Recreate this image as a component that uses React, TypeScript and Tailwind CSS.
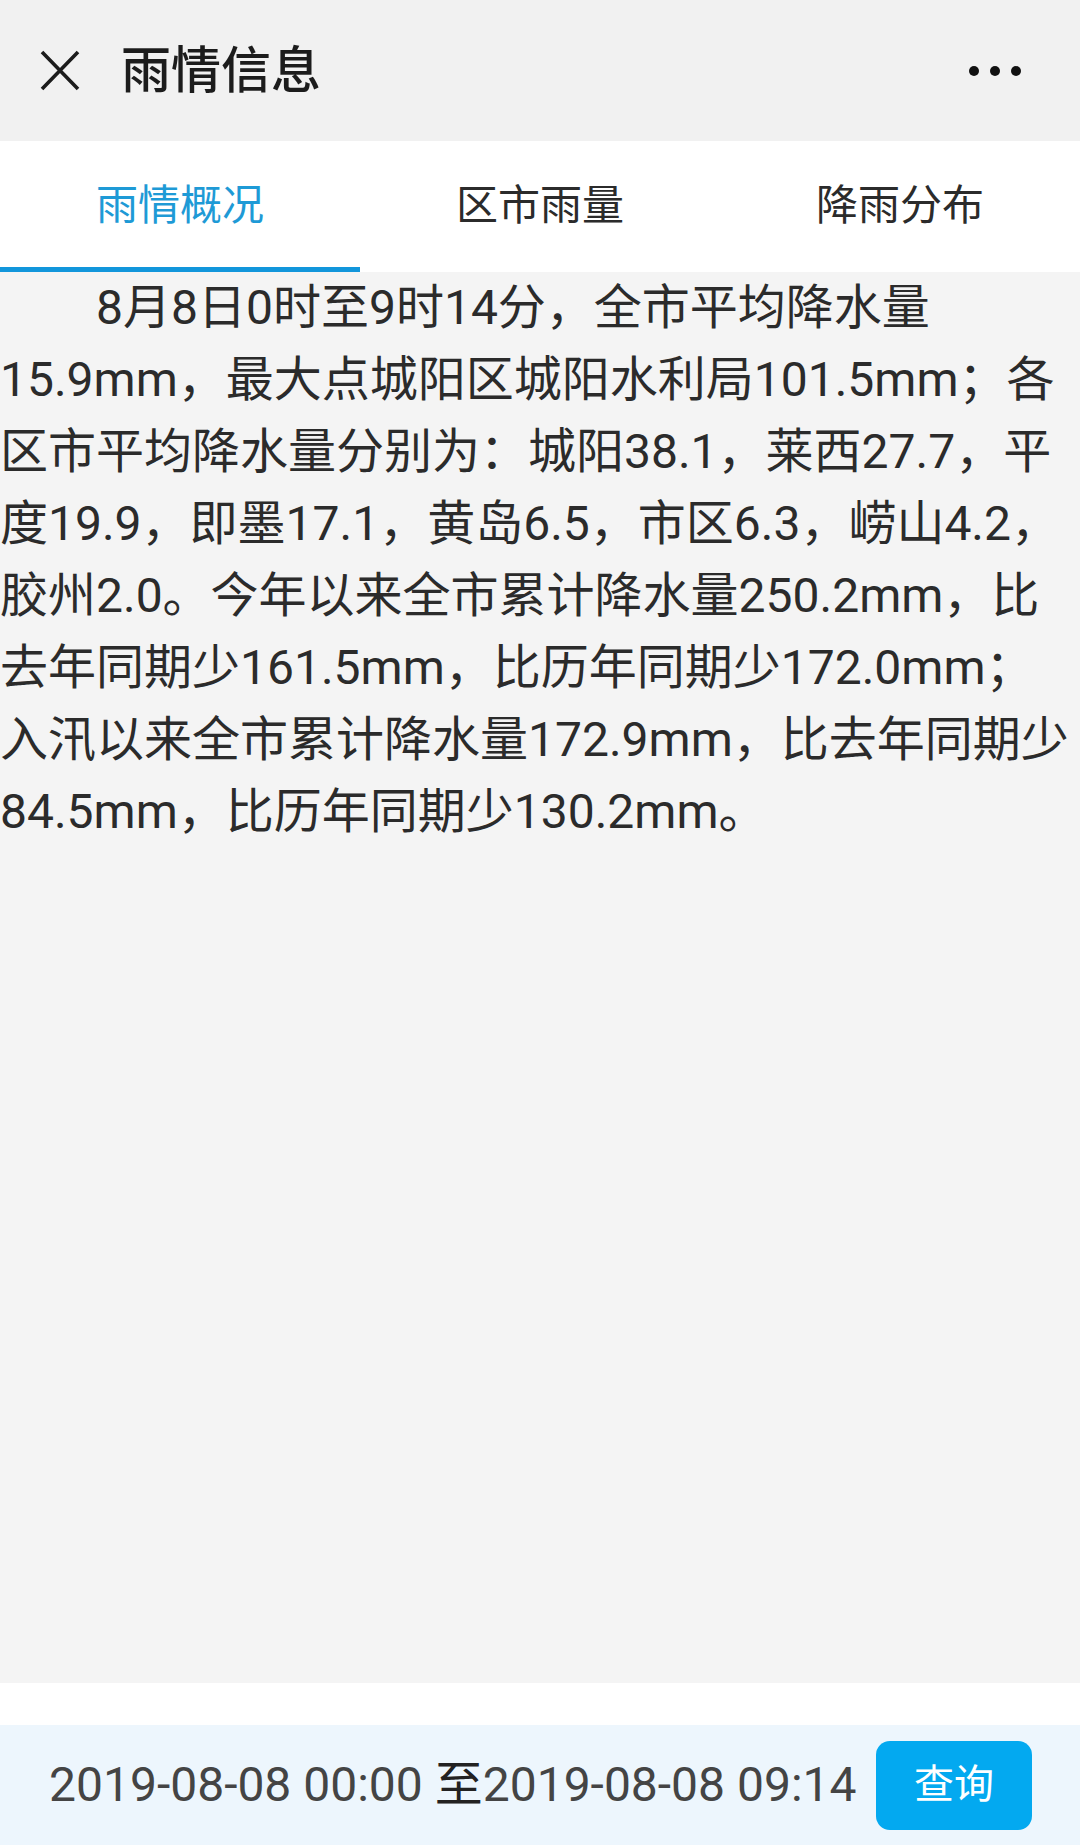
import React from "react";

const tabs = ["雨情概况", "区市雨量", "降雨分布"];

const lines = [
  "8月8日0时至9时14分，全市平均降水量",
  "15.9mm，最大点城阳区城阳水利局101.5mm；各",
  "区市平均降水量分别为：城阳38.1，莱西27.7，平",
  "度19.9，即墨17.1，黄岛6.5，市区6.3，崂山4.2，",
  "胶州2.0。今年以来全市累计降水量250.2mm，比",
  "去年同期少161.5mm，比历年同期少172.0mm；",
  "入汛以来全市累计降水量172.9mm，比去年同期少",
  "84.5mm，比历年同期少130.2mm。",
];

const font = "font-['Roboto','Noto_Sans_CJK_SC',sans-serif]";

export default function App() {
  return (
    <div className={`flex h-[1845px] w-[1080px] flex-col ${font}`}>
      {/* title bar */}
      <div className="flex h-[141px] shrink-0 items-center bg-[#f1f1f1]">
        <svg className="ml-[40px]" width="40" height="41" viewBox="0 0 40 41">
          <path d="M2 2 L38 39 M38 2 L2 39" stroke="#1c1c1c" strokeWidth="3.6" strokeLinecap="butt" />
        </svg>
        <div className="ml-[41px] text-[50px] font-medium leading-none text-[#1c1c1c]">雨情信息</div>
        <div className="ml-auto mr-[59px] flex items-center gap-[11px]">
          <span className="h-[10px] w-[10px] rounded-full bg-[#111]" />
          <span className="h-[10px] w-[10px] rounded-full bg-[#111]" />
          <span className="h-[10px] w-[10px] rounded-full bg-[#111]" />
        </div>
      </div>

      {/* tabs */}
      <div className="grid h-[131px] shrink-0 grid-cols-3 bg-white">
        {tabs.map((t, i) => (
          <div
            key={t}
            className={`flex items-center justify-center pt-[2px] text-[42px] ${
              i === 0
                ? "border-b-[5px] border-[#1296db] text-[#1e9ad6]"
                : "border-b-[5px] border-transparent text-[#2b2b2b]"
            }`}
          >
            {t}
          </div>
        ))}
      </div>

      {/* summary */}
      <div className="flex-1 bg-[#f4f4f4]">
        <p className="whitespace-nowrap indent-[96px] text-[48px] leading-[72px] text-[#2b2b2b]">
          {lines.map((l, i) => (
            <React.Fragment key={i}>
              {l}
              {i < lines.length - 1 && <br />}
            </React.Fragment>
          ))}
        </p>
      </div>

      <div className="h-[42px] shrink-0 bg-white" />

      {/* date range + query */}
      <div className="flex h-[120px] shrink-0 items-center bg-[#edf6fd] pl-[49px] pr-[48px]">
        <div className="whitespace-nowrap text-[48px] leading-none text-[#444]">
          2019-08-08 00:00 <span className="text-[#222]">至</span>2019-08-08 09:14
        </div>
        <button className="ml-auto flex h-[89px] w-[156px] items-center justify-center rounded-[14px] bg-[#03a9f0] text-[40px] text-white">
          查询
        </button>
      </div>
    </div>
  );
}
